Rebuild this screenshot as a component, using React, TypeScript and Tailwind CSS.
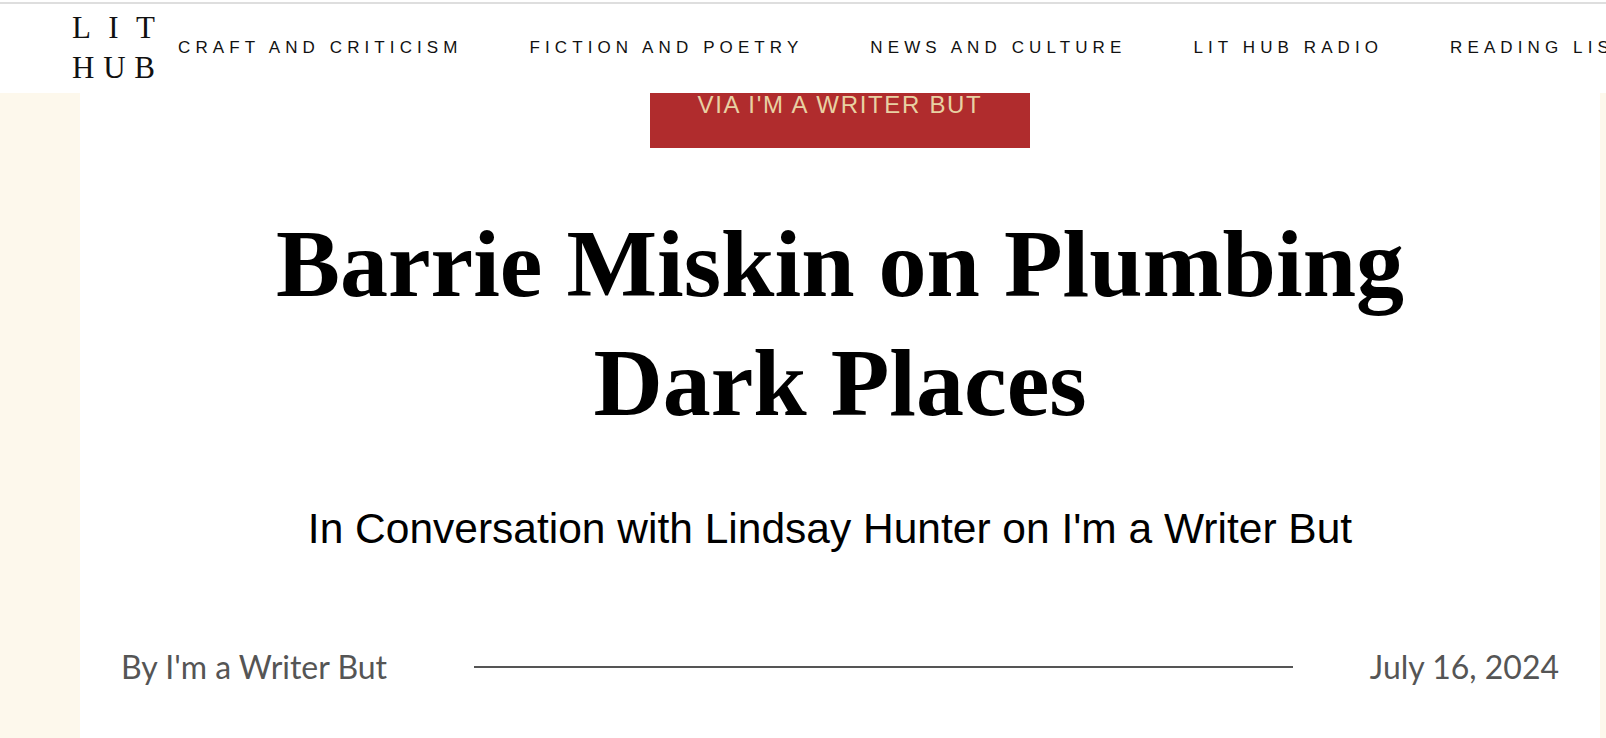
import React from 'react';

const navItems = ['Craft and Criticism', 'Fiction and Poetry', 'News and Culture', 'Lit Hub Radio', 'Reading Lists'];

export default function App() {
  return (
    <div className="min-h-screen bg-[#fdf8ec] overflow-hidden">
      {/* Top nav */}
      <header className="bg-white pt-[2px] h-[93px] overflow-hidden">
        <div className="h-[2px] bg-[#dedede]" />
        <div className="flex items-center h-[89px] pl-[72px] whitespace-nowrap">
          <div className="w-[83px] shrink-0 font-['Liberation_Serif',serif] text-[#111] text-[31px] leading-[40px] -mt-[1px]">
            <div className="flex justify-between"><span>L</span><span>I</span><span>T</span></div>
            <div className="flex justify-between"><span>H</span><span>U</span><span>B</span></div>
          </div>
          <nav className="flex items-center gap-[67px] ml-[23px] font-['Liberation_Sans',sans-serif] text-[17px] tracking-[0.3em] text-[#111] -mt-[1px]">
            {navItems.map((item) => (
              <span key={item} className="uppercase shrink-0">{item}</span>
            ))}
          </nav>
        </div>
      </header>

      {/* Article head */}
      <main className="mx-[80px] w-[1520px] bg-white pb-[60px]">
        <div className="flex justify-center">
          <div className="w-[380px] h-[55px] bg-[#b02c2d] text-center font-['Liberation_Sans',sans-serif] text-[24px] leading-none tracking-[0.07em] text-[#e8d1a3]">
            VIA I'M A WRITER BUT
          </div>
        </div>

        <h1 className="mt-[56px] text-center font-['Liberation_Serif',serif] font-bold text-[96px] leading-[119px] text-black">
          Barrie Miskin on Plumbing
          <br />
          Dark Places
        </h1>

        <h2 className="mt-[66px] pr-[20px] text-center font-['Liberation_Sans',sans-serif] font-medium text-[42.5px] leading-none text-black">
          In Conversation with Lindsay Hunter on I'm a Writer But
        </h2>

        <div className="mt-[100px] flex items-center px-[41px] font-['Lato',sans-serif] text-[32px] leading-none text-[#555]">
          <span>By I'm a Writer But</span>
          <div className="flex-1 h-[2px] bg-[#555] ml-[87px] mr-[77px]" />
          <span>July 16, 2024</span>
        </div>
      </main>
    </div>
  );
}
